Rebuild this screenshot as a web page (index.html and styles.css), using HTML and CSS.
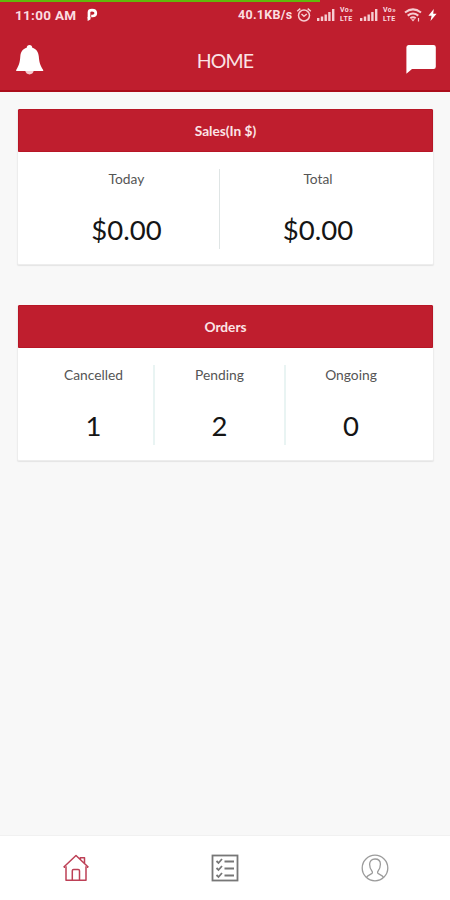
FILE: index.html
```html
<!DOCTYPE html>
<html lang="en">
<head>
<meta charset="utf-8">
<title>Home</title>
<link rel="stylesheet" href="styles.css">
</head>
<body>
<div class="app">
  <header class="top">
    <div class="progress"></div>
    <div class="status">
      <span class="clock">11:00 AM</span>
      <svg class="pay" width="12" height="14" viewBox="0 0 12 14"><path d="M3 10.5V4.2C3 2.8 4 2.1 6 2.1S9.8 3.1 9.8 5 8.4 8 6.4 8H5.2" fill="none" stroke="#fff" stroke-width="2.7"/><path d="M1.6 9h2.8v2.6L1.6 13z" fill="#fff"/></svg>
      <span class="speed">40.1KB/s</span>
      <svg class="alarm" width="16" height="16" viewBox="0 0 16 16" fill="none" stroke="#f6cdd2" stroke-width="1.5"><circle cx="8" cy="8.5" r="5.5"/><path d="M1.2 4.2 4.3 1.6M14.8 4.2 11.7 1.6M5.5 7 8 9.3 10.8 7"/></svg>
      <svg class="signal" width="18" height="12" viewBox="0 0 18 12" fill="#f6cdd2"><path d="M0 9h2.4v3H0zM3.8 7.5h2.4V12H3.8zM7.5 5.5h2.4V12H7.5zM11.2 3h2.4v9h-2.4zM15 0h2.4v12H15z"/></svg>
      <span class="lte"><span>Vo»</span><span>LTE</span></span>
      <svg class="signal" width="18" height="12" viewBox="0 0 18 12" fill="#f6cdd2"><path d="M0 9h2.4v3H0zM3.8 7.5h2.4V12H3.8zM7.5 5.5h2.4V12H7.5zM11.2 3h2.4v9h-2.4zM15 0h2.4v12H15z"/></svg>
      <span class="lte"><span>Vo»</span><span>LTE</span></span>
      <svg class="wifi" width="18" height="14" viewBox="0 0 18 14" fill="none" stroke="#f6cdd2" stroke-width="2"><path d="M1 4.5Q9-1.8 17 4.5M3.7 7.6Q9 3.3 14.3 7.6M6.3 10.3Q9 8.2 11.7 10.3"/><path d="m7 11.3 2 2.2 2-2.2z" fill="#f6cdd2" stroke="none"/><path d="M14.5 10v3.5" stroke-width="1.2"/></svg>
      <svg class="bolt" width="9" height="12" viewBox="0 0 9 12"><path d="M5.8 0 .4 6.8h3.2L2.5 12 8.6 4.8H5.2z" fill="#fff"/></svg>
    </div>
    <div class="bar">
      <svg class="bell" width="28" height="30" viewBox="0 0 28 30"><path d="M13.500 0c1.700 0 2.800 1.100 2.800 2.800 4 1.200 6 4.200 6.500 8.700.5 5.500 1.200 8.500 4.400 13.600v1H.2v-1c3-5.100 3.700-8.100 4.100-13.600.4-4.500 2.400-7.500 6.400-8.700C10.700 1.100 11.800 0 13.500 0z" fill="#fff"/><path d="M9.300 26.100h8.400C17.300 28.100 15.700 29.400 13.500 29.400s-3.800-1.300-4.200-3.300z" fill="#f5cbd0"/></svg>
      <h1 class="title">HOME</h1>
      <svg class="chat" width="30" height="29" viewBox="0 0 30 29"><path d="M2.500 0h25A2.300 2.300 0 0 1 29.800 2.300v19.400A2.300 2.300 0 0 1 27.500 24H6L.4 28.700V2.300A2.300 2.300 0 0 1 2.500 0z" fill="#fff"/></svg>
    </div>
  </header>

  <main class="content">
    <section class="card">
      <h2 class="card-head">Sales(In $)</h2>
      <div class="stats sales">
        <div class="stat"><span class="label">Today</span><span class="value">$0.00</span></div>
        <div class="stat"><span class="label">Total</span><span class="value">$0.00</span></div>
      </div>
    </section>
    <section class="card">
      <h2 class="card-head">Orders</h2>
      <div class="stats orders">
        <div class="stat"><span class="label">Cancelled</span><span class="value">1</span></div>
        <div class="stat"><span class="label">Pending</span><span class="value">2</span></div>
        <div class="stat"><span class="label">Ongoing</span><span class="value">0</span></div>
      </div>
    </section>
  </main>

  <nav class="tabs">
    <a class="tab"><svg width="28" height="28" viewBox="0 0 28 28" fill="none" stroke="#bd4056" stroke-width="1.500" stroke-linejoin="round"><path d="M4 12.200V26.300H24V12.200M10.300 26.300V16.800Q10.300 15.500 11.600 15.500H16.200Q17.500 15.500 17.500 16.800V26.300"/><path d="M1.600 13.300 14 1.500 26.400 13.300M3 13.300h-1.400M26.400 13.300H25M18.300 5.400V3.800H22.500V9.500"/></svg></a>
    <a class="tab"><svg width="28" height="28" viewBox="0 0 28 28" fill="none" stroke="#777"><rect x="1.500" y="1.500" width="25" height="25" stroke-width="1.800"/><path d="m5.500 7 2 2 3.500-4M5.500 14l2 2 3.500-4M5.500 21l2 2 3.500-4" stroke-width="1.800"/><path d="M13.500 7.500H23M13.500 14.500H23M13.500 21.500H23" stroke-width="2"/></svg></a>
    <a class="tab"><svg width="28" height="28" viewBox="0 0 28 28" fill="none" stroke="#9b9b9b" stroke-width="1.300"><circle cx="14" cy="14" r="12.800"/><path d="M5.500 23.500C6 21.500 8.500 20.800 10.700 19.700 11.600 19.200 11.600 17.800 10.900 17 9.300 15 8.600 12.700 8.600 10.300 8.600 7 10.700 5 14 5S19.400 7 19.400 10.300C19.400 12.700 18.700 15 17.100 17 16.400 17.800 16.400 19.200 17.300 19.700 19.500 20.800 22 21.500 22.500 23.500"/></svg></a>
  </nav>
</div>
</body>
</html>
```

FILE: styles.css
```css
* { box-sizing: border-box; }

body {
  margin: 0;
  background: #f8f8f8;
  font-family: Lato, "Liberation Sans", sans-serif;
}

.app {
  display: flex;
  flex-direction: column;
  width: 450px;
  height: 900px;
}

.top {
  height: 92px;
  background: #bf1e2e;
  border-bottom: 2px solid #ab0d1b;
}

.progress {
  width: 320px;
  height: 2px;
  background: #62b80b;
}

.status {
  display: flex;
  align-items: center;
  height: 25px;
  padding: 0 13px 0 15px;
  color: #fbdde0;
  font-family: Roboto, sans-serif;
  font-size: 13.500px;
  font-weight: 700;
}

.clock { width: 63px; letter-spacing: 0.3px; white-space: nowrap; }
.pay { margin-left: 8px; }
.speed { width: 56px; margin-left: auto; font-size: 12.500px; letter-spacing: 0.3px; white-space: nowrap; }
.alarm { margin-left: 2px; }
.signal { margin-left: 5px; }

.lte {
  display: flex;
  flex-direction: column;
  width: 15px;
  margin-left: 5px;
  font-size: 7px;
  letter-spacing: 0.4px;
  line-height: 9px;
}

.lte + .signal { margin-left: 5px; }
.wifi { margin-left: 6px; }
.bolt { margin-left: 6px; }

.bar {
  display: grid;
  grid-template-columns: 60px 1fr 60px;
  align-items: center;
  height: 65px;
  padding: 0 14px 0 16px;
}

.title {
  margin: 2px 2px 0 0;
  color: #fbe4e6;
  font-size: 19.500px;
  font-weight: 400;
  letter-spacing: -0.8px;
  line-height: 24px;
  text-align: center;
}

.chat { justify-self: end; }

.content {
  display: flex;
  flex: 1;
  flex-direction: column;
  gap: 40px;
  padding: 17px 16px 0 17px;
}

.card {
  height: 156px;
  border: 1px solid #ededed;
  border-top: 0;
  border-radius: 2px;
  background: #fff;
  box-shadow: 0 1px 1px #e4e4e4;
}

.card-head {
  height: 43px;
  margin: 0;
  border: 1px solid #b71626;
  border-radius: 1px 1px 0 0;
  background: #bf1e2e;
  color: #fbe4e6;
  font-size: 13.700px;
  font-weight: 700;
  line-height: 42px;
  text-align: center;
}

.stats {
  display: grid;
  padding: 17px 17px 0 16px;
}

.sales { grid-template-columns: 185px 1fr; }
.orders { grid-template-columns: 119px 131px 1fr; }

.stat {
  display: flex;
  flex-direction: column;
  align-items: center;
  height: 80px;
}

.stat + .stat { border-left: 1px solid #dfe5e5; }
.orders .stat + .stat { border-left: 2px solid #e9f4f3; }

.label {
  color: #555;
  font-size: 13.800px;
  line-height: 20px;
}

.value {
  margin-top: 24px;
  color: #151515;
  font-size: 27.500px;
  line-height: 34px;
}

.tabs {
  display: grid;
  grid-template-columns: repeat(3, 1fr);
  height: 65px;
  padding-left: 1px;
  border-top: 1px solid #f1f1f1;
  background: #fff;
}

.tab {
  display: flex;
  align-items: center;
  justify-content: center;
}
```
